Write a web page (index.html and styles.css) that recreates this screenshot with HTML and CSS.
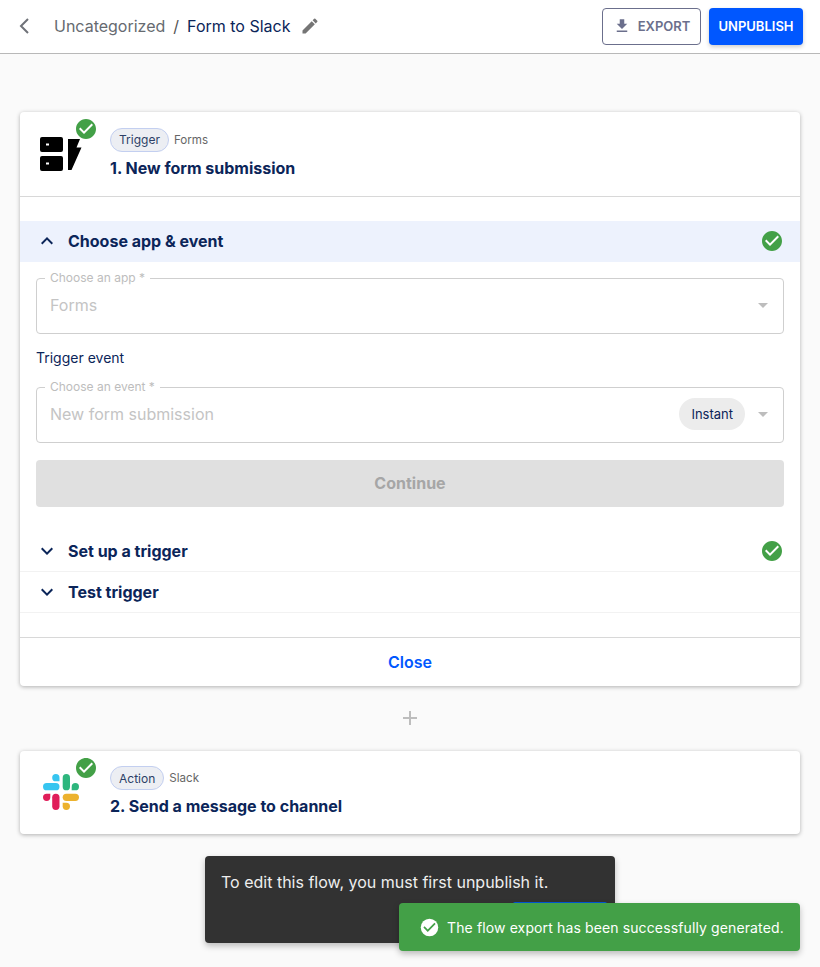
FILE: index.html
```html
<!DOCTYPE html>
<html lang="en">
<head>
    <meta charset="UTF-8">
    <title>Form to Slack</title>
    <link rel="stylesheet" href="styles.css">
</head>
<body>
    <svg class="defs" width="0" height="0">
        <symbol id="check-circle" viewBox="0 0 24 24">
            <circle cx="12" cy="12" r="7" fill="#fff"/>
            <path fill="currentColor" d="M12 2C6.48 2 2 6.48 2 12s4.48 10 10 10 10-4.48 10-10S17.52 2 12 2zm-2 15l-5-5 1.41-1.41L10 14.17l7.59-7.59L19 8l-9 9z"/>
        </symbol>
        <symbol id="chevron-down" viewBox="0 0 24 24">
            <path fill="currentColor" d="M7.41 8.59 12 13.17l4.59-4.58L18 10l-6 6-6-6z"/>
        </symbol>
        <symbol id="chevron-up" viewBox="0 0 24 24">
            <path fill="currentColor" d="M12 8l-6 6 1.41 1.41L12 10.83l4.59 4.58L18 14z"/>
        </symbol>
    </svg>

    <header class="top-bar">
        <div class="crumbs">
            <svg class="back-icon" width="12" height="18" viewBox="0 0 12 18"><path d="M10 2 3 9l7 7" fill="none" stroke="#6f7278" stroke-width="2"/></svg>
            <span class="crumb-parent">Uncategorized</span>
            <span class="crumb-sep">/</span>
            <span class="crumb-current">Form to Slack</span>
            <svg class="edit-icon" width="20" height="20" viewBox="0 0 24 24"><path fill="#757575" d="M3 17.25V21h3.75L17.81 9.94l-3.75-3.75L3 17.25zM20.71 7.04a1 1 0 0 0 0-1.41l-2.34-2.34a1 1 0 0 0-1.41 0l-1.83 1.83 3.75 3.75 1.83-1.83z"/></svg>
        </div>
        <div class="top-actions">
            <button class="export-button">
                <svg width="18" height="18" viewBox="0 0 24 24"><path fill="currentColor" d="M19 9h-4V3H9v6H5l7 7 7-7zM5 18v2h14v-2H5z"/></svg>
                EXPORT
            </button>
            <button class="unpublish-button">UNPUBLISH</button>
        </div>
    </header>

    <main class="flow">
        <section class="step-card">
            <div class="step-head">
                <div class="step-icon">
                    <svg width="42" height="34" viewBox="0 0 42 34">
                        <path fill="#000" fill-rule="evenodd" d="M2 0h19a2 2 0 0 1 2 2v11a2 2 0 0 1-2 2H2a2 2 0 0 1-2-2V2a2 2 0 0 1 2-2zm4 6.500v2h3v-2zM2 19h19a2 2 0 0 1 2 2v11a2 2 0 0 1-2 2H2a2 2 0 0 1-2-2V21a2 2 0 0 1 2-2zm4 6.500v2h3v-2z"/>
                        <path fill="#000" d="M28 2h12l-3.500 8.500h5L31.500 33H28z"/>
                    </svg>
                    <svg class="step-check"><use href="#check-circle"/></svg>
                </div>
                <div class="step-text">
                    <div class="step-meta"><span class="step-tag">Trigger</span><span class="step-app">Forms</span></div>
                    <div class="step-title">1. New form submission</div>
                </div>
            </div>

            <div class="step-body">
                <div class="acc-row acc-open">
                    <svg class="acc-chevron"><use href="#chevron-up"/></svg>
                    <span class="acc-label">Choose app &amp; event</span>
                    <svg class="acc-check"><use href="#check-circle"/></svg>
                </div>
                <div class="acc-content">
                    <fieldset class="field">
                        <legend>Choose an app *</legend>
                        <span class="field-value">Forms</span>
                        <span class="field-arrow"></span>
                    </fieldset>
                    <div class="field-title">Trigger event</div>
                    <fieldset class="field">
                        <legend>Choose an event *</legend>
                        <span class="field-value">New form submission</span>
                        <span class="field-chip">Instant</span>
                        <span class="field-arrow"></span>
                    </fieldset>
                    <button class="continue-button" disabled>Continue</button>
                </div>
                <div class="acc-row acc-line">
                    <svg class="acc-chevron"><use href="#chevron-down"/></svg>
                    <span class="acc-label">Set up a trigger</span>
                    <svg class="acc-check"><use href="#check-circle"/></svg>
                </div>
                <div class="acc-row acc-line">
                    <svg class="acc-chevron"><use href="#chevron-down"/></svg>
                    <span class="acc-label">Test trigger</span>
                </div>
            </div>

            <div class="step-foot">Close</div>
        </section>

        <div class="add-step">
            <svg width="16" height="16" viewBox="0 0 16 16"><path d="M8 1v14M1 8h14" stroke="#bdbdbd" stroke-width="2"/></svg>
        </div>

        <section class="step-card">
            <div class="step-head step-head-last">
                <div class="step-icon">
                    <svg class="slack-logo" width="36" height="36" viewBox="0 0 36 36">
                        <rect x="0" y="9" width="16.500" height="7.300" rx="3.650" fill="#36c5f0"/>
                        <path fill="#36c5f0" d="M16.500 7.300h-3.650a3.650 3.650 0 1 1 3.650-3.650z"/>
                        <rect x="19.700" y="0" width="7.300" height="16.300" rx="3.650" fill="#2eb67d"/>
                        <path fill="#2eb67d" d="M28.700 16.300v-3.650a3.650 3.650 0 1 1 3.650 3.650z"/>
                        <rect x="19.700" y="19.700" width="16.300" height="7.300" rx="3.650" fill="#ecb22e"/>
                        <path fill="#ecb22e" d="M19.700 28.700h3.650a3.650 3.650 0 1 1-3.650 3.650z"/>
                        <rect x="9.200" y="19.700" width="7.300" height="16.300" rx="3.650" fill="#e01e5a"/>
                        <path fill="#e01e5a" d="M7.300 19.700v3.650a3.650 3.650 0 1 1-3.650-3.650z"/>
                    </svg>
                    <svg class="step-check"><use href="#check-circle"/></svg>
                </div>
                <div class="step-text">
                    <div class="step-meta"><span class="step-tag">Action</span><span class="step-app">Slack</span></div>
                    <div class="step-title">2. Send a message to channel</div>
                </div>
            </div>
        </section>
    </main>

    <div class="toast-dark">
        To edit this flow, you must first unpublish it.
        <span class="toast-button"></span>
    </div>
    <div class="toast-success">
        <svg class="toast-check" viewBox="0 0 24 24">
            <circle cx="12" cy="12" r="10" fill="#fff"/>
            <path fill="#43a047" d="M10 17l-5-5 1.41-1.41L10 14.17l7.59-7.59L19 8l-9 9z"/>
        </svg>
        The flow export has been successfully generated.
    </div>
</body>
</html>
```

FILE: styles.css
```css
* {
    box-sizing: border-box;
}
html, body {
    height: 967px;
    overflow: hidden;
}
body {
    margin: 0;
    background: #fafafa;
    color: #0b2559;
    font-family: "Inter", "Liberation Sans", sans-serif;
    position: relative;
}
.defs {
    position: absolute;
}
.top-bar {
    height: 54px;
    padding: 0 17px 1px 18px;
    display: flex;
    align-items: center;
    justify-content: space-between;
    background: #fff;
    border-bottom: 1px solid #b8b8b8;
}
.crumbs {
    display: flex;
    align-items: center;
    font-size: 16px;
}
.back-icon {
    margin-right: 24px;
}
.crumb-parent {
    color: #666a70;
}
.crumb-sep {
    margin: 0 8px;
    color: #555;
}
.edit-icon {
    margin-left: 9px;
}
.top-actions {
    display: flex;
    gap: 8px;
}
.top-actions button {
    height: 37px;
    border-radius: 4px;
    font-family: inherit;
    font-size: 13px;
    font-weight: 600;
}
.export-button {
    width: 99px;
    padding: 0;
    display: flex;
    align-items: center;
    justify-content: center;
    gap: 7px;
    background: #fff;
    color: #6b6f8c;
    border: 1px solid #6b6f8c;
}
.unpublish-button {
    width: 94px;
    padding: 0;
    background: #0057ff;
    color: #fff;
    border: none;
    box-shadow: 0 2px 4px rgba(0, 0, 0, 0.2);
}
.flow {
    padding: 58px 20px 0;
}
.step-card {
    background: #fff;
    border-radius: 4px;
    box-shadow: 0 1px 4px rgba(0, 0, 0, 0.3);
}
.step-head {
    height: 85px;
    padding: 0 20px;
    display: flex;
    align-items: center;
    gap: 29px;
    border-bottom: 1px solid #d8d8d8;
}
.step-head-last {
    height: 83px;
    border-bottom: none;
}
.step-icon {
    position: relative;
    width: 41px;
    height: 34px;
    flex-shrink: 0;
}
.step-icon > svg:first-child {
    display: block;
}
.slack-logo {
    margin: -2px 0 0 3px;
}
.step-check {
    position: absolute;
    left: 34px;
    top: -20px;
    width: 24px;
    height: 24px;
    color: #43a047;
}
.step-text {
    padding-bottom: 3px;
}
.step-meta {
    display: flex;
    align-items: center;
    gap: 5px;
}
.step-tag {
    height: 24px;
    padding: 0 8px;
    display: flex;
    align-items: center;
    background: #eceef3;
    border: 1px solid #c3cff0;
    border-radius: 12px;
    font-size: 12px;
    color: #2d3f66;
}
.step-app {
    font-size: 11.600px;
    color: #666;
}
.step-title {
    margin-top: 6px;
    font-size: 16px;
    font-weight: 700;
    line-height: 20px;
}
.step-body {
    padding: 24px 0;
}
.acc-row {
    height: 41px;
    padding: 0 18px 0 15px;
    display: flex;
    align-items: center;
}
.acc-open {
    padding-bottom: 1px;
    background: #edf2fd;
}
.acc-line {
    border-bottom: 1px solid #f2f2f2;
}
.acc-chevron {
    width: 24px;
    height: 24px;
    margin-right: 9px;
    color: #0b2559;
}
.acc-label {
    flex: 1;
    font-size: 16px;
    font-weight: 700;
}
.acc-check {
    width: 24px;
    height: 24px;
    margin-right: -2px;
    color: #43a047;
}
.acc-content {
    padding: 9px 16px 24px;
}
.field {
    height: 63px;
    margin: 0;
    padding: 0 15px 8px 8px;
    display: flex;
    align-items: center;
    border: 1px solid #cfcfcf;
    border-radius: 4px;
}
.field legend {
    padding: 0 5px;
    font-size: 12px;
    color: #bdbdbd;
    line-height: 14px;
}
.field-value {
    flex: 1;
    padding-left: 5px;
    font-size: 16px;
    color: #c4c4c4;
}
.field-chip {
    height: 32px;
    padding: 0 12px;
    margin-right: 13px;
    display: flex;
    align-items: center;
    background: #ececec;
    border-radius: 16px;
    font-size: 13px;
    color: #0b2559;
}
.field-arrow {
    width: 0;
    height: 0;
    border-left: 5px solid transparent;
    border-right: 5px solid transparent;
    border-top: 5px solid #bdbdbd;
}
.field-title {
    margin: 15px 0 13px;
    font-size: 14px;
    line-height: 18px;
}
.continue-button {
    display: block;
    width: 100%;
    height: 47px;
    margin-top: 17px;
    padding: 0 0 1px;
    background: #e0e0e0;
    color: #a6a6a6;
    border: none;
    border-radius: 4px;
    font-family: inherit;
    font-size: 16px;
    font-weight: 700;
}
.step-foot {
    height: 49px;
    display: flex;
    align-items: center;
    justify-content: center;
    border-top: 1px solid #d8d8d8;
    color: #0057ff;
    font-size: 16px;
    font-weight: 600;
}
.add-step {
    height: 65px;
    padding-bottom: 2px;
    display: flex;
    align-items: center;
    justify-content: center;
}
.toast-dark {
    position: absolute;
    left: 205px;
    top: 856px;
    width: 410px;
    height: 87px;
    padding: 16px;
    background: #323232;
    border-radius: 4px;
    box-shadow: 0 3px 6px rgba(0, 0, 0, 0.25);
    color: #eee;
    font-size: 16px;
    line-height: 20px;
}
.toast-button {
    position: absolute;
    left: 308px;
    top: 46px;
    width: 94px;
    height: 20px;
    background: #0057d8;
    border-radius: 2px;
}
.toast-success {
    position: absolute;
    left: 399px;
    top: 903px;
    width: 401px;
    height: 48px;
    padding-left: 20px;
    display: flex;
    align-items: center;
    gap: 7px;
    background: #43a047;
    border-radius: 4px;
    box-shadow: 0 3px 6px rgba(0, 0, 0, 0.25);
    color: #fff;
    font-size: 14px;
    letter-spacing: 0.125px;
}
.toast-check {
    width: 21px;
    height: 21px;
}
```
